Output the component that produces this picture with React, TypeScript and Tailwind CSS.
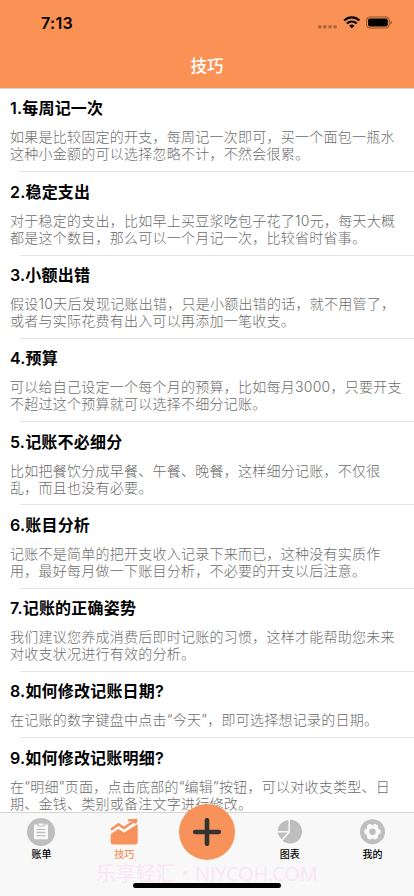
import React from 'react';

type Tip = { title: string; lines: string[] };

const tips: Tip[] = [
  { title: '1.每周记一次', lines: ['如果是比较固定的开支，每周记一次即可，买一个面包一瓶水', '这种小金额的可以选择忽略不计，不然会很累。'] },
  { title: '2.稳定支出', lines: ['对于稳定的支出，比如早上买豆浆吃包子花了10元，每天大概', '都是这个数目，那么可以一个月记一次，比较省时省事。'] },
  { title: '3.小额出错', lines: ['假设10天后发现记账出错，只是小额出错的话，就不用管了，', '或者与实际花费有出入可以再添加一笔收支。'] },
  { title: '4.预算', lines: ['可以给自己设定一个每个月的预算，比如每月3000，只要开支', '不超过这个预算就可以选择不细分记账。'] },
  { title: '5.记账不必细分', lines: ['比如把餐饮分成早餐、午餐、晚餐，这样细分记账，不仅很', '乱，而且也没有必要。'] },
  { title: '6.账目分析', lines: ['记账不是简单的把开支收入记录下来而已，这种没有实质作', '用，最好每月做一下账目分析，不必要的开支以后注意。'] },
  { title: '7.记账的正确姿势', lines: ['我们建议您养成消费后即时记账的习惯，这样才能帮助您未来', '对收支状况进行有效的分析。'] },
  { title: '8.如何修改记账日期?', lines: ['在记账的数字键盘中点击“今天”，即可选择想记录的日期。'] },
  { title: '9.如何修改记账明细?', lines: ['在“明细”页面，点击底部的“编辑”按钮，可以对收支类型、日', '期、金钱、类别或备注文字进行修改。'] },
];

function StatusBar() {
  return (
    <div className="flex h-[44px] items-center justify-between pl-[41px] pr-[21px] pt-[2px] text-black">
      <span className="text-[16px] font-semibold leading-5 tracking-[0.3px]">7:13</span>
      <svg width="75" height="16" viewBox="0 0 75 16">
        <g fill="#000" opacity="0.3">
          <rect x="0.1" y="10.2" width="3.4" height="3.4" rx="1" />
          <rect x="5.2" y="10.2" width="3.4" height="3.4" rx="1" />
          <rect x="10.3" y="10.2" width="3.4" height="3.4" rx="1" />
          <rect x="15.4" y="10.2" width="3.4" height="3.4" rx="1" />
        </g>
        <g fill="none" stroke="#000" strokeWidth="2.1">
          <path d="M26.2 5.4a11 11 0 0 1 15.2 0" />
          <path d="M28.9 8.4a7.1 7.1 0 0 1 9.8 0" />
        </g>
        <path d="M31.2 10.7a3.9 3.9 0 0 1 5.2 0L33.8 13.3Z" />
        <rect x="48.6" y="2" width="22.6" height="11" rx="3" fill="none" stroke="#000" strokeOpacity="0.5" strokeWidth="0.9" />
        <rect x="50.1" y="3.5" width="19.6" height="8" rx="1.7" />
        <path d="M72.5 5.7c1.7.7 1.7 3 0 3.7Z" opacity="0.5" />
      </svg>
    </div>
  );
}

function BillIcon() {
  return (
    <svg width="28" height="28" viewBox="0 0 28 28">
      <circle cx="14" cy="14" r="14" fill="#bebebe" />
      <path d="M8 6.5h2.400v2h7.200v-2H20q1 0 1 1v12.800q0 1-1 1H8q-1 0-1-1V7.500q0-1 1-1Z" fill="#fafafa" />
      <path d="M11.500 5.500h5v2h-5z" fill="#fafafa" />
      <path d="M9.500 11.300h9M9.500 14.500h9M9.500 17.700h9" stroke="#bebebe" strokeWidth="1.300" />
    </svg>
  );
}

function TipsIcon() {
  return (
    <svg width="28" height="28" viewBox="0 0 28 28" fill="#f7925a">
      <path d="M.700 16.200 8.300 10.900l5.900 3.700L26.500 6.800 27.700 6.800V24q0 2.500-2.500 2.500H3.200Q.700 26.500.700 24Z" />
      <path d="M1 11.700 8.400 6.300l5.600 3.800L23.500 3.500" fill="none" stroke="#f7925a" strokeWidth="2.500" />
      <path d="M17.500 1.300 27.700.800 26.200 6.200 23.900 4.700 20.500 3.300 18 3.300Z" />
    </svg>
  );
}

function ChartIcon() {
  return (
    <svg width="28" height="28" viewBox="0 0 28 28" fill="#bebebe">
      <path d="M13.900 1.800A11.900 11.900 0 1 1 6.400 22.700l7.500-7.900Z" />
      <path d="M12.400 2v11H1.500A12 12 0 0 1 12.400 2Z" />
      <path d="M1.600 14.600h10.300l-6.400 6.700a12 12 0 0 1-3.900-6.700Z" />
    </svg>
  );
}

function MineIcon() {
  return (
    <svg width="28" height="28" viewBox="0 0 28 28">
      <circle cx="13.500" cy="13.700" r="12.500" fill="#bebebe" />
      <path
        transform="translate(-.5 -.3)"
        d="M11.500 6.500q2.500 2.500 5 0l2.600 1.500q-.900 3.400 2.500 4.300v3.400q-3.400.900-2.500 4.300l-2.600 1.500q-2.500-2.500-5 0l-2.600-1.500q.900-3.400-2.500-4.300v-3.400q3.400-.900 2.500-4.300Z"
        fill="#fafafa" stroke="#fafafa" strokeWidth="1" strokeLinejoin="round"
      />
      <circle cx="13.500" cy="13.700" r="3.200" fill="#bebebe" />
    </svg>
  );
}

function Tab({ icon, label, active = false }: { icon: React.ReactNode; label: string; active?: boolean }) {
  return (
    <div className="flex flex-1 flex-col items-center pt-[5px]">
      {icon}
      <span className={`mt-px text-[10px] font-medium leading-[14px] ${active ? 'text-[#f7925a]' : 'text-black'}`}>{label}</span>
    </div>
  );
}

export default function App() {
  return (
    <div className="relative h-[896px] w-[414px] overflow-hidden bg-white font-['Inter','Noto_Sans_CJK_SC',sans-serif]">
      <header className="h-[88px] bg-[#fa9255]">
        <StatusBar />
        <h1 className="text-center text-[16.5px] font-medium leading-[45px] text-white">技巧</h1>
      </header>
      <main className="border-t border-[#e2d5ce]">
        {tips.map((tip) => (
          <section key={tip.title} className="whitespace-nowrap">
            <div className="px-[10px] pb-[8.900px] pt-[9.400px]">
              <h2 className="text-[16px] font-semibold leading-[20px] tracking-[0.2px] text-black">{tip.title}</h2>
              <div className="mt-[10px] text-[14px] font-light leading-[17px] tracking-[0.25px] text-[#6c6c6c]">
                {tip.lines.map((line) => <p key={line}>{line}</p>)}
              </div>
            </div>
            <div className="ml-[20px] h-px bg-[#e5e5e5]" />
          </section>
        ))}
      </main>
      <nav className="absolute inset-x-0 bottom-0 flex h-[84px] border-t border-[#d5d5d5] bg-[#f8f8f8]">
        <Tab icon={<BillIcon />} label="账单" />
        <Tab icon={<TipsIcon />} label="技巧" active />
        <div className="flex flex-1 justify-center">
          <div className="-mt-[9px] flex h-[56px] w-[56px] items-center justify-center rounded-full bg-[#f7925a]">
            <svg width="28" height="28" viewBox="0 0 28 28">
              <path d="M14 2.200v23.600M2.200 14h23.600" stroke="#333" strokeWidth="4.600" strokeLinecap="round" />
            </svg>
          </div>
        </div>
        <Tab icon={<ChartIcon />} label="图表" />
        <Tab icon={<MineIcon />} label="我的" />
        <div className="absolute left-[96px] top-[47px] whitespace-nowrap font-['Noto_Sans','Noto_Sans_CJK_SC',sans-serif] text-[20px] leading-[28px] tracking-[-0.200px] text-[#f9e6f7]">乐享轻汇・NJYCQH.COM</div>
        <div className="absolute bottom-[8px] left-[133px] h-[5px] w-[148px] rounded-full bg-black" />
      </nav>
    </div>
  );
}
